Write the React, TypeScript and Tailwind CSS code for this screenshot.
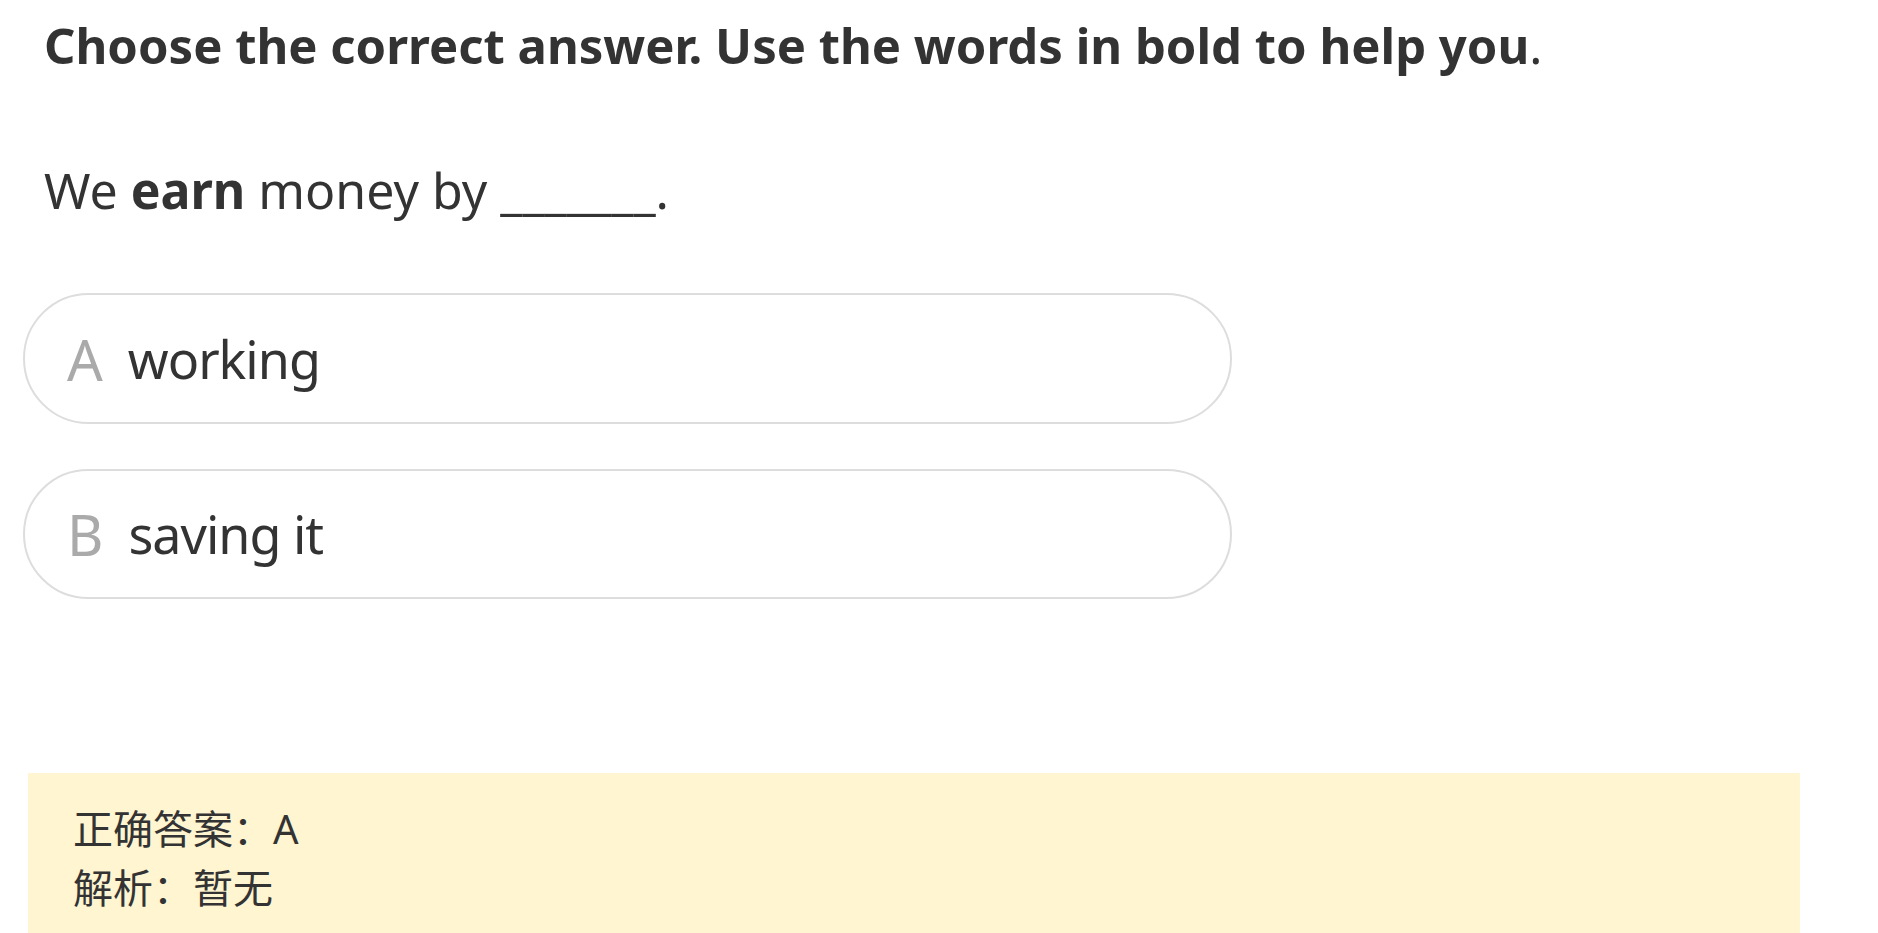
import React from "react";

export default function App() {
  const font = { fontFamily: '"Noto Sans", "Noto Sans CJK SC", sans-serif' };
  return (
    <div className="w-full h-[933px] bg-white overflow-hidden text-[#333]" style={font}>
      <div className="pl-[44px] pt-[10px] text-[49px] font-bold leading-[70px]">
        Choose the correct answer. Use the words in bold to help you<span className="font-normal">.</span>
      </div>
      <div className="pl-[44px] mt-[75px] text-[50px] leading-[70px]">
        We <span className="font-bold">earn</span> money by _______.
      </div>
      <div className="mt-[68px] flex flex-col gap-[45px] pl-[23px]">
        <div className="w-[1209px] h-[131px] rounded-full border-2 border-[#dddddd] flex items-center pl-[42px] text-[52px] tracking-[-1px]">
          <span className="text-[#aaaaaa] text-[56px] mr-[26px]">A</span>
          <span>working</span>
        </div>
        <div className="w-[1209px] h-[130px] rounded-full border-2 border-[#dddddd] flex items-center pl-[42px] text-[52px] tracking-[-1px]">
          <span className="text-[#aaaaaa] text-[56px] mr-[26px]">B</span>
          <span>saving it</span>
        </div>
      </div>
      <div className="ml-[28px] mt-[174px] w-[1772px] h-[200px] bg-[#fff5d1] pl-[45px] pt-[26px] text-[40px] leading-[59px]">
        <div>正确答案：A</div>
        <div>解析：暂无</div>
      </div>
    </div>
  );
}
